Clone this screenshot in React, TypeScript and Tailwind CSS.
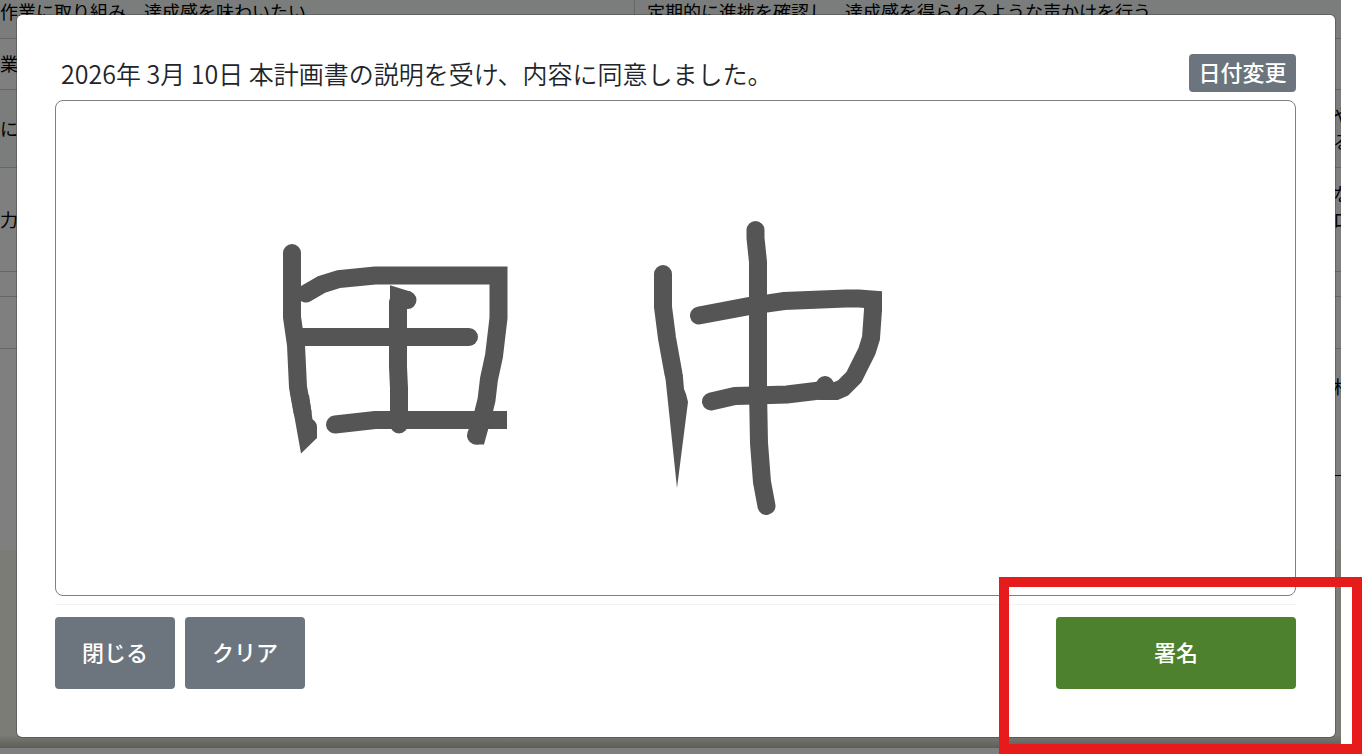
import { useState } from "react";

const rows = [
  {
    goal: "作業に取り組み、達成感を味わいたい。",
    support: "定期的に進捗を確認し、達成感を得られるような声かけを行う。",
    note: [],
    className: "bg-[#f4faf6] h-[39px] leading-[22px] [&>td]:pt-0 [&>td]:pb-4",
  },
  { goal: "業", support: "", note: [], className: "h-[51px]" },
  { goal: "に", support: "", note: ["や", "る"], className: "bg-[#f4faf6] h-[78px]" },
  { goal: "力", support: "", note: ["な", "ロ", ""], className: "h-[104px]" },
  { goal: "", support: "", note: [], className: "h-[25px] [&>td]:py-0" },
  { goal: "", support: "", note: [], className: "h-[52px]" },
];

function PlanTable() {
  return (
    <table className="w-full table-fixed border-separate border-spacing-0 text-lg leading-[26px] text-black">
      <tbody>
        {rows.map((row, i) => (
          <tr
            key={i}
            className={`${row.className} [&>td]:border-b [&>td]:border-[#ccc] [&>td]:whitespace-nowrap`}
          >
            <td className="w-[635px] border-r pt-[11px] pb-[13px]">{row.goal}</td>
            <td className="pt-[11px] pb-[13px] pl-3">{row.support}</td>
            <td className="w-6 pt-[11px] pb-[13px] pl-4">
              {row.note.map((line, n) => (
                <div key={n} className="h-[26px] w-2 overflow-hidden">
                  {line}
                </div>
              ))}
            </td>
          </tr>
        ))}
      </tbody>
    </table>
  );
}

function Signature() {
  return (
    <svg
      viewBox="56 101 1239 494"
      className="h-full w-full"
      fill="none"
      stroke="#555555"
      strokeWidth="18"
      strokeLinecap="round"
      strokeMiterlimit="10"
      role="img"
      aria-label="署名欄"
    >
      <path d="M292 253V317L296 345L298 387L302.5 412M308 427V427.1" />
      <path d="M306 293.5L321.5 284.5L339 279L375 275.5H498.5V318L494 356L489 379L486.5 400L481 422L476 435.5" />
      <path d="M302 337H469" />
      <path d="M407.5 300V300.1M398 303V367L399 388V424.5" />
      <path d="M335 424.5L375 420H490" />
      <path d="M480 420H507" strokeLinecap="butt" />
      <path d="M663 274V307L667 338L673.5 374" />
      <path d="M755.5 230V238L758 262V390L759 443L762 482L766.5 506" />
      <path d="M699 315.5L750 306L784 301L846 298.5H859L873 299.6V310L871 338L867 351L854 377L843 388L836 391H820M825 385V385.1" />
      <path d="M711 401.5L735 396L787 394.5L824 390" />
      <g fill="#555555" stroke="none">
        <path d="M290 392L295 420L301 453.5L317 438V427L312.5 419.5L309 395Z" />
        <path d="M390 285.3L411 291.7L407.5 309H389V303L390 298Z" />
        <path d="M470 428L476 444.5H484L489 426Z" />
        <path d="M665.3 376.7L677 488L688 402L686 394L684 389L682.7 374Z" />
      </g>
    </svg>
  );
}

export default function App() {
  const [signed, setSigned] = useState(true);

  return (
    <div className="relative min-h-screen overflow-hidden bg-white pr-[22px] font-['Noto_Sans_CJK_JP',sans-serif]">
      <div className="relative flex min-h-screen flex-col overflow-hidden bg-white">
        <PlanTable />
        <div className="flex h-[201px] flex-col items-end overflow-hidden text-lg leading-[26px]">
          <p className="mt-6 h-[26px] w-2 overflow-hidden">材</p>
          <div className="mt-[76px] w-6 border-t border-black" />
        </div>
        <div className="flex-1 bg-[#f6f8ec]" />
        <div className="h-3 bg-linear-to-b from-[#f0f2e6] to-[#bcbdb2]" />
        <div className="h-[6px] bg-white" />

        <div className="absolute inset-0 bg-black/50 px-4 pt-[14px] pr-[5px] pb-4">
          <section
            role="dialog"
            aria-label="同意の署名"
            className="rounded-md border border-black/20 bg-white bg-clip-padding pt-[39px] pr-[39px] pb-12 pl-[38px]"
          >
            <header className="flex h-[46px] items-start justify-between">
              <h1 className="pl-[6px] text-[25px] leading-[38px] font-[350] text-[#212529]">
                2026年 3月 10日 本計画書の説明を受け、内容に同意しました。
              </h1>
              <button
                type="button"
                className="h-[38px] w-[107px] rounded bg-[#6c757d] pb-1 text-[22px] leading-[34px] font-medium text-white"
              >
                日付変更
              </button>
            </header>
            <div className="h-[496px] rounded-lg border border-[#808080]">
              {signed && <Signature />}
            </div>
            <hr className="mt-2 border-[#f2f2f2]" />
            <footer className="mt-3 flex gap-[10px] text-[22px] font-medium text-white">
              <button type="button" className="h-[72px] w-[120px] rounded bg-[#6c757d] pb-1">
                閉じる
              </button>
              <button
                type="button"
                className="h-[72px] w-[120px] rounded bg-[#6c757d] pb-1"
                onClick={() => setSigned(false)}
              >
                クリア
              </button>
              <button type="button" className="ml-auto h-[72px] w-[240px] rounded bg-[#4d812d] pb-1">
                署名
              </button>
            </footer>
          </section>
        </div>
      </div>

      {/* highlight around the sign button */}
      <div className="pointer-events-none absolute right-px bottom-0 h-[177px] w-[363px] border-10 border-[#e61c1c]" />
    </div>
  );
}
